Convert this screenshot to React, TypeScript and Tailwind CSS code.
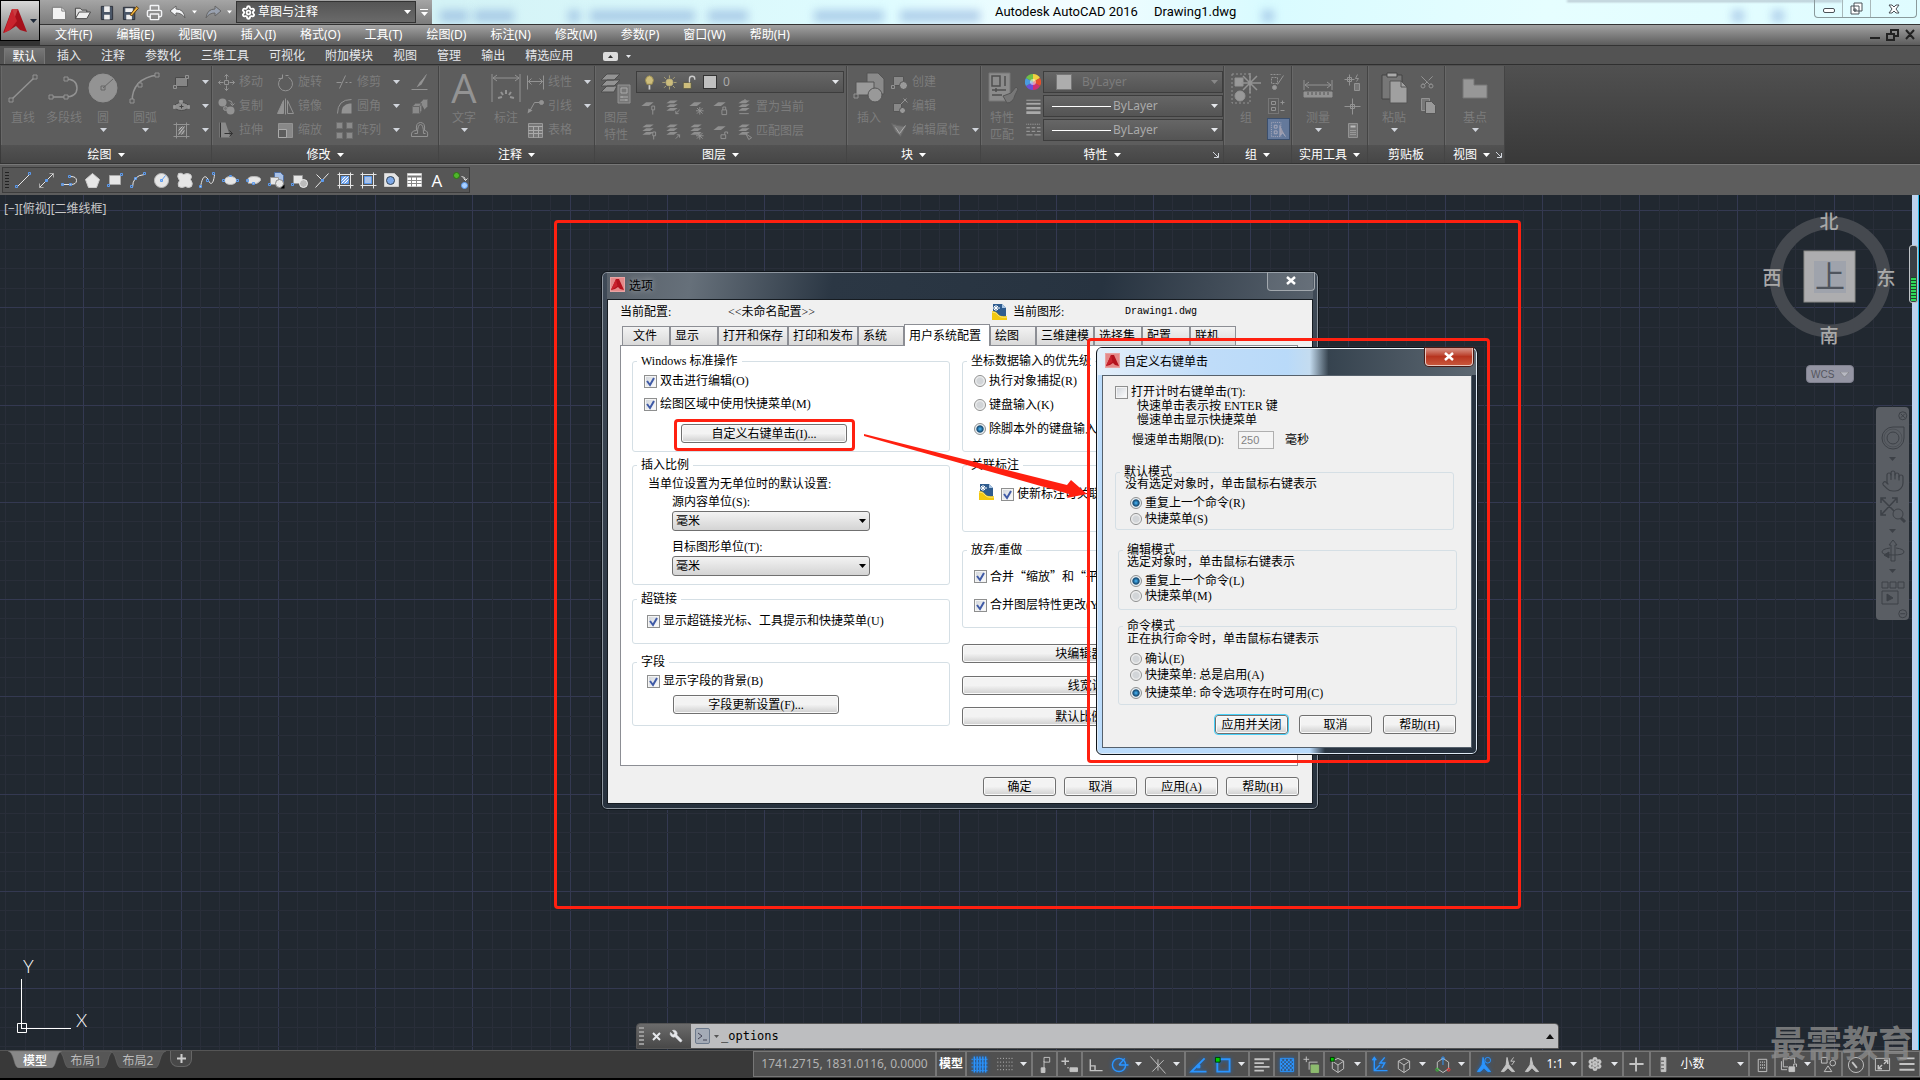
import type { ReactNode } from 'react';
import { Hand, Printer, Scissors, Settings, Wrench } from 'lucide-react';

type IconProps = { size?: number; box?: string; className?: string; children: ReactNode };

// the half unit in the default box keeps one pixel strokes sharp
const Icon = ({ size = 18, box = '-.5 -.5 18 18', className = '', children }: IconProps) => (
  <svg width={size} height={size} viewBox={box} fill="none" stroke="currentColor" className={`shrink-0 overflow-visible ${className}`}>
    {children}
  </svg>
);

const Caret = ({ className = 'text-gray-200' }: { className?: string }) => (
  <svg width="7" height="4" viewBox="0 0 7 4" className={`shrink-0 ${className}`}>
    <path d="M0 0h7L3.500 4z" fill="currentColor" />
  </svg>
);

const Corner = () => (
  <svg width="6" height="7" viewBox="0 0 6 7" className="text-gray-300" fill="none" stroke="currentColor">
    <path d="M0 1l5 5M5.500 2v4.500H1" />
  </svg>
);

const AppLogo = ({ size = 15 }: { size?: number }) => (
  <svg width={size} height={size} viewBox="0 0 15 15" className="shrink-0">
    <rect width="15" height="15" fill="#e9a3a3" />
    <rect x="1" y="1" width="13" height="13" fill="#e58a8a" />
    <path d="M6 2h3l5 11-4-1-2-2-3 2-4 1z" fill="#b3121d" />
    <path d="M6 2l1.500 7L1 13z" fill="#c9222d" />
  </svg>
);

const DwgIcon = () => (
  <svg width="15" height="16" viewBox="0 0 15 16" className="shrink-0">
    <path d="M1 0h9l4 4v9H1z" fill="#2f5c8f" />
    <path d="M10 0l4 4h-4z" fill="#a9c6e4" />
    <path d="M4 1v6M1 4h7M2 2l4 4M6 2L2 6" stroke="#fff" />
    <path d="M0 16V7q4 0 6 3t9 2v4z" fill="#f2c80f" />
    <path d="M0 8q4 0 6 3t9 2" fill="none" stroke="#fbe27a" />
  </svg>
);

/* ---------- quick access ---------- */

const quickIcons = [
  <Icon size={17} key="new"><path d="M2 3h10l4 4v9H2z" fill="#f2f2f2" stroke="#777" /><path d="M12 3v4h4" stroke="#777" /></Icon>,
  <Icon size={17} key="open"><path d="M1 15V4h5l2 2h5v3" fill="#ddd" stroke="#444" /><path d="M1 15l4-7h12l-4 7z" fill="#eee" stroke="#444" /></Icon>,
  <Icon size={17} key="save"><path d="M3 2h12v14H3z" fill="#4a5667" stroke="#2a2f38" /><path d="M6 2h6v6H6zM6 11h6v5H6z" fill="#eee" stroke="none" /></Icon>,
  <Icon size={17} key="saveas"><path d="M1 3h12v13H1z" fill="#4a5667" stroke="#2a2f38" /><path d="M3 4h8v4H3zM4 11h6v5H4z" fill="#eee" stroke="none" /><path d="M8 11l7-9 2 2-7 8z" fill="#f1b53c" stroke="#5b3a14" /></Icon>,
  <Printer size={17} key="print" className="text-gray-100" strokeWidth={2} />,
];

const UndoIcon = ({ flip = false }: { flip?: boolean }) => (
  <svg width="16" height="14" viewBox="0 0 16 14" className={flip ? 'text-gray-400' : 'text-gray-100'}>
    <path d={flip ? 'M16 6L10 1v3Q2 4 1 13q3-5 9-5v3z' : 'M0 6l6-5v3q8 0 9 9-3-5-9-5v3z'} fill="currentColor" stroke="#666" />
  </svg>
);

/* ---------- ribbon ---------- */

const big = '0 0 32 32';
const LineBig = <Icon size={32} box={big}><path d="M4 28L28 5" strokeWidth="1.500" /><path d="M2 26h4v4H2zM26 3h4v4h-4z" fill="#5d5d5d" /></Icon>;
const PolyBig = <Icon size={32} box={big}><path d="M3 25h14q12 0 12-9t-12-9" strokeWidth="1.500" /><path d="M1 23h4v4H1zM16 23h4v4h-4zM16 5h4v4h-4z" fill="#5d5d5d" /></Icon>;
const CircleBig = <Icon size={32} box={big}><circle cx="16" cy="16" r="14" fill="#939393" /><path d="M16 16L26 7" stroke="#666" /><path d="M14 14h4v4h-4z" stroke="#666" /></Icon>;
const ArcBig = <Icon size={32} box={big}><path d="M3 30Q3 6 29 3" strokeWidth="1.500" /><path d="M1 27h4v4H1zM9 11h4v4H9zM26 1h4v4h-4z" fill="#5d5d5d" /></Icon>;
const DimBig = <Icon size={32} box={big}><path d="M2 2v28M30 2v28M3 6h26M7 3L3 6l4 3M25 3l4 3-4 3" /><path d="M16 18v4M11 20l2 3M21 20l-2 3M8 26l4-1M24 26l-4-1" strokeWidth="2" /></Icon>;
const LayerBig = <Icon size={32} box={big}><path d="M7 2h13l-6 6H1zM7 8h13l-6 6H1zM7 14h10l-3 6H1z" fill="#939393" stroke="#4d4d4d" /><path d="M18 13h12v18H18z" fill="#777" /><path d="M21 16h6v5h-6zM20 25h8M20 28h8M22 24v2M26 27v2" stroke="#aaa" /></Icon>;
const InsertBig = <Icon size={32} box={big}><path d="M14 1h11l6 6v15H14z" fill="#8a8a8a" stroke="#555" /><path d="M3 10h18v13H3z" fill="#9a9a9a" stroke="#555" /><circle cx="22" cy="23" r="7" fill="#999" stroke="#555" /><path d="M1 22h4v4H1z" /></Icon>;
const MatchBig = <Icon size={32} box={big}><path d="M3 1h21v28H3z" fill="#8c8c8c" stroke="#777" /><path d="M6 4h8v10H6zM19 4v10M6 18h14M6 23h10M10 16v4" stroke="#4f4f4f" strokeWidth="1.500" /><path d="M30 15l-5 6-8 3 4 7q6 0 8-8l3-6z" fill="#777" stroke="#555" /></Icon>;
const GroupBig = <Icon size={32} box={big}><path d="M2 2h18v29H2z" strokeDasharray="2 2" /><path d="M5 6h8v8H5z" fill="#999" /><circle cx="10" cy="24" r="5" fill="#999" /><path d="M20 1v20M11 11h20M13 4l14 14M27 4L13 18" strokeWidth="1.500" /></Icon>;
const MeasureBig = <Icon size={32} box={big}><path d="M2 8v10M30 8v10M3 13h26M7 10l-4 3 4 3M25 10l4 3-4 3" /><path d="M2 20h28v5H2z" fill="#939393" /><path d="M6 20v3M10 20v3M14 20v3M18 20v3M22 20v3M26 20v3" stroke="#555" /></Icon>;
const PasteBig = <Icon size={32} box={big}><path d="M4 3h20v24H4z" fill="#777" stroke="#444" /><path d="M9 1h10v4H9z" fill="#aaa" stroke="#444" /><path d="M12 9h11l6 6v16H12z" fill="#a0a0a0" stroke="#555" /><path d="M23 9v6h6" stroke="#555" /></Icon>;
const BaseBig = <Icon size={32} box={big}><path d="M4 7h11v6h13v13H4z" fill="#979797" stroke="#777" /></Icon>;

const RectS = <Icon><path d="M3 4h12v9H3z" fill="#868686" stroke="#4a4a4a" /><path d="M1 12h3v3H1zM13 2h3v3h-3z" fill="#5d5d5d" /></Icon>;
const EllS = <Icon><ellipse cx="9" cy="9" rx="7" ry="4" fill="#8f8f8f" stroke="#4a4a4a" /><path d="M9 7v4M7 9h4" stroke="#444" /><path d="M7 3h3v2H7zM1 8h2v3H1zM15 8h2v3h-2z" fill="#999" /></Icon>;
const HatchS = <Icon><path d="M4 1v16M14 1v16M1 3h16M1 15h16" /><path d="M6 5h6v8H6z" fill="#777" stroke="none" /><path d="M6 9l4-4M6 13l6-8M9 13l3-4" stroke="#bbb" /></Icon>;
const MoveS = <Icon><path d="M9 1v5M9 12v5M1 9h5M12 9h5M7 3l2-2 2 2M7 15l2 2 2-2M3 7L1 9l2 2M15 7l2 2-2 2M7 7h4v4H7z" /></Icon>;
const CopyS = <Icon><circle cx="5" cy="5" r="4" fill="#939393" stroke="none" /><circle cx="13" cy="13" r="4" fill="#939393" stroke="none" /><circle cx="8" cy="11" r="2" fill="#777" /><path d="M11 3q4 0 4 4M13 6l2 2 2-2" /></Icon>;
const StretchS = <Icon><path d="M2 16V1h6l5 15z" fill="#8a8a8a" stroke="none" /><path d="M3 1v15M7 12h8M12 9l3 3-3 3" stroke="#333" /></Icon>;
const RotateS = <Icon><path d="M6 4a7 7 0 1 0 6 0M6 1v4H2M9 2h3" /></Icon>;
const MirrorS = <Icon><path d="M7 3v13H1z" fill="#939393" /><path d="M11 3v13h6zM9 1v16" /></Icon>;
const ScaleS = <Icon><path d="M2 2h14v14H2z" fill="#888" /><path d="M2 8h8v8H2z" fill="#5d5d5d" stroke="#aaa" /></Icon>;
const TrimS = <Icon><path d="M1 9h5M10 9h2M14 9h2M4 15l6-13" /></Icon>;
const FilletS = <Icon><path d="M2 16Q2 2 16 2" /><path d="M6 16Q6 7 14 6h2v10z" fill="#939393" stroke="none" /></Icon>;
const ArrayS = <Icon><path d="M1 1h6v6H1zM11 1h6v6h-6zM1 11h6v6H1zM11 11h6v6h-6z" fill="#8a8a8a" stroke="#6e6e6e" /></Icon>;
const EraseS = <Icon><path d="M16 2L9 9l-3 5 5-3z" fill="#939393" stroke="none" /><path d="M1 16h16M16 1l-6 8" /></Icon>;
const ExplodeS = <Icon><path d="M2 9l3-3h6v7l-2 3H2zM10 5l3-3h4v7l-3 3" fill="#8a8a8a" stroke="#6e6e6e" /><path d="M2 9h7v7M9 9l2-3" stroke="#666" /></Icon>;
const OffsetS = <Icon><path d="M1 15q-1-6 5-6-1-8 4-8t4 8q4 0 3 6z" /><path d="M4 12h3q0-9 3-9t3 9h2" /></Icon>;
const LinearS = <Icon><path d="M1 2v14M17 2v14M2 8h14M5 5L2 8l3 3M13 5l3 3-3 3" /></Icon>;
const LeaderS = <Icon><path d="M3 14l5-9h5" /><path d="M1 16l1-5 4 2z" fill="#939393" stroke="none" /><circle cx="15" cy="5" r="2" fill="#939393" /></Icon>;
const TableS = <Icon><path d="M2 2h14v14H2z" fill="#777" stroke="#999" /><path d="M2 5h14M2 9h14M2 12h14M7 5v11M12 5v11" stroke="#aaa" /></Icon>;
const BlockS = <Icon><path d="M3 3h10v9H3z" fill="#888" stroke="#555" /><circle cx="13" cy="12" r="4" fill="#999" stroke="#555" /><path d="M1 12h3v3H1z" /></Icon>;
const BlockEditS = <Icon><path d="M3 6h8v8H3z" fill="#888" stroke="#555" /><circle cx="12" cy="13" r="3" fill="#999" stroke="#555" /><path d="M10 7l6-6M13 1l4 4" /></Icon>;
const AttrS = <Icon><path d="M1 2l6 2 8 1-5 10-5-5z" fill="#777" stroke="#666" /><path d="M5 6l4 6 6-8" stroke="#aaa" /></Icon>;

const LayerS = ({ extra }: { extra: string }) => (
  <Icon size={17} className="text-[#939393]">
    <path d="M6 1h8l-4 3H2zM6 5h8l-4 3H2zM6 9h8l-4 3H2z" fill="#8f8f8f" stroke="none" />
    <path d={extra} />
  </Icon>
);
const SheetS = ({ extra }: { extra: string }) => (
  <Icon size={17} className="text-[#939393]">
    <path d="M6 3h8l-5 4H1z" fill="#8f8f8f" stroke="none" />
    <path d={extra} />
  </Icon>
);

const BigButton = ({ icon, label, w, caret }: { icon: ReactNode; label: string[]; w: string; caret?: boolean }) => (
  <button className={`flex flex-col items-center pt-1.5 text-[#939393] ${w}`}>
    {icon}
    <span className="mt-[5px] flex flex-col text-xs leading-[17px] text-[#7c7c7c]">
      {label.map((l) => <span key={l}>{l}</span>)}
    </span>
    {caret && <Caret className="mt-0.5 text-gray-300" />}
  </button>
);

const SmallButton = ({ icon, label, caret }: { icon: ReactNode; label?: string; caret?: boolean }) => (
  <button className="flex h-6 items-center gap-1 text-xs text-[#7c7c7c]">
    <span className="text-[#939393]">{icon}</span>
    {label && <span className="whitespace-nowrap">{label}</span>}
    {caret && <Caret className="ml-2 text-gray-300" />}
  </button>
);

type PanelProps = { title: string; w: string; arrow?: boolean; corner?: boolean; children: ReactNode };

const Panel = ({ title, w, arrow = true, corner, children }: PanelProps) => (
  <section className={`flex shrink-0 flex-col border-r border-[#444] bg-[#5d5d5d] ${w}`}>
    <div className="flex flex-1 border-l border-[#686868]">{children}</div>
    <div className="flex h-[18px] items-center justify-center gap-1.5 bg-linear-to-b from-[#525252] to-[#464646] px-1 pt-px text-xs whitespace-nowrap text-white">
      {corner && <span className="flex-1" />}
      <span>{title}</span>
      {arrow && <Caret className="text-white" />}
      {corner && <span className="flex flex-1 justify-end"><Corner /></span>}
    </div>
  </section>
);

const Col = ({ w, children }: { w: string; children: ReactNode }) => <div className={`flex flex-col pt-1 ${w}`}>{children}</div>;

const ByLayer = ({ label, children, dim }: { label: string; children: ReactNode; dim?: boolean }) => (
  <div className="flex h-6 items-center">
    <span className="flex w-[21px] justify-center">{children}</span>
    <div className="relative flex h-[22px] w-[180px] items-center border border-[#3d3d3d] bg-linear-to-b from-[#666] to-[#545454]">
      {dim ? <span className="ml-3 h-4 w-4 border border-[#777] bg-[#adadad]" /> : <span className="ml-2 h-px w-[59px] bg-white" />}
      <select aria-label={label} className={`h-full flex-1 appearance-none bg-transparent text-xs outline-none ${dim ? 'pl-2.5 text-[#7c7c7c]' : 'pl-0.5 text-[#aaa]'}`}>
        <option>ByLayer</option>
      </select>
      <span className="pointer-events-none absolute right-1"><Caret className={dim ? 'text-[#888]' : 'text-gray-200'} /></span>
    </div>
  </div>
);

const Ribbon = () => (
  <div className="flex h-[99px] shrink-0 border-b border-b-[#333] bg-linear-to-b from-[#505050] to-[#393939] pt-px pl-px">
    <Panel title="绘图" w="w-[211px]">
      <BigButton icon={LineBig} label={['直线']} w="w-[42px]" />
      <BigButton icon={PolyBig} label={['多段线']} w="w-[40px]" />
      <BigButton icon={CircleBig} label={['圆']} w="w-[38px]" caret />
      <BigButton icon={ArcBig} label={['圆弧']} w="w-[46px]" caret />
      <Col w="pl-1">
        <SmallButton icon={RectS} caret />
        <SmallButton icon={EllS} caret />
        <SmallButton icon={HatchS} caret />
      </Col>
    </Panel>
    <Panel title="修改" w="w-[227px]">
      <Col w="w-[63px] pl-1">
        <SmallButton icon={MoveS} label="移动" />
        <SmallButton icon={CopyS} label="复制" />
        <SmallButton icon={StretchS} label="拉伸" />
      </Col>
      <Col w="w-[59px]">
        <SmallButton icon={RotateS} label="旋转" />
        <SmallButton icon={MirrorS} label="镜像" />
        <SmallButton icon={ScaleS} label="缩放" />
      </Col>
      <Col w="w-[75px]">
        <SmallButton icon={TrimS} label="修剪" caret />
        <SmallButton icon={FilletS} label="圆角" caret />
        <SmallButton icon={ArrayS} label="阵列" caret />
      </Col>
      <Col w="">
        <SmallButton icon={EraseS} />
        <SmallButton icon={ExplodeS} />
        <SmallButton icon={OffsetS} />
      </Col>
    </Panel>
    <Panel title="注释" w="w-[156px]">
      <BigButton icon={<span className="h-8 font-['Open_Sans','Noto_Sans'] text-[40px] leading-8">A</span>} label={['文字']} w="w-[48px]" caret />
      <BigButton icon={DimBig} label={['标注']} w="w-[36px]" />
      <Col w="pl-0.5">
        <SmallButton icon={LinearS} label="线性" caret />
        <SmallButton icon={LeaderS} label="引线" caret />
        <SmallButton icon={TableS} label="表格" />
      </Col>
    </Panel>
    <Panel title="图层" w="w-[252px]">
      <BigButton icon={LayerBig} label={['图层', '特性']} w="w-[40px]" />
      <div className="flex flex-col pt-[5px]">
        <div className="relative flex h-[22px] w-[208px] items-center gap-1 border border-[#3d3d3d] bg-linear-to-b from-[#666] to-[#545454] pl-1">
          <Icon size={16}><path d="M6 11Q3 6 6 3t6 0 0 8z" fill="#cdbd7c" stroke="#9a8c50" /><path d="M9 12v5" stroke="#ccc" strokeWidth="2" /></Icon>
          <Icon size={16} className="text-[#b5aa7a]"><circle cx="9" cy="9" r="4" fill="#cdbd7c" /><path d="M9 1v3M9 14v3M1 9h3M14 9h3M3 3l2 2M13 13l2 2M15 3l-2 2M5 13l-2 2" /></Icon>
          <Icon size={16}><path d="M2 9h9v7H2z" fill="#cdbd7c" stroke="#554" /><path d="M9 9V5q0-3 3-3t3 3v1" stroke="#ccc" strokeWidth="1.500" /></Icon>
          <span className="ml-0.5 h-3.5 w-3.5 border border-[#333] bg-[#c0c0c0]" />
          <select aria-label="图层列表" className="h-full flex-1 appearance-none bg-transparent pl-0.5 text-xs text-[#aaa] outline-none"><option>0</option></select>
          <span className="pointer-events-none absolute right-1"><Caret /></span>
        </div>
        <div className="mt-0.5 flex h-6 items-center gap-[7px] pl-1 text-xs text-[#7c7c7c]">
          <SheetS extra="M13 11v5M12 7h3v4h-3z" /><LayerS extra="M16 11l-4 4M12 12v3h3" /><SheetS extra="M12 8v8M8 12h8M9 9l6 6M15 9l-6 6" /><SheetS extra="M10 11h5v5h-5zM11 11V8h3v3" /><LayerS extra="M3 15h10M9 3V0M7 2l2-2 2 2" />
          <button className="-ml-1 whitespace-nowrap">置为当前</button>
        </div>
        <div className="flex h-6 items-center gap-[7px] pl-1 text-xs text-[#7c7c7c]">
          <LayerS extra="M14 13v4M13 9h3v4h-3z" /><LayerS extra="M12 16l4-4M16 15v-3h-3" /><LayerS extra="M12 9v8M8 13h8M9 10l6 6M15 10l-6 6" /><SheetS extra="M9 12h5v4H9zM13 12V9h3v2" /><LayerS extra="M10 11l6 4-3 2z" />
          <button className="-ml-1 whitespace-nowrap">匹配图层</button>
        </div>
      </div>
    </Panel>
    <Panel title="块" w="w-[134px]">
      <BigButton icon={InsertBig} label={['插入']} w="w-[42px]" />
      <Col w="">
        <SmallButton icon={BlockS} label="创建" />
        <SmallButton icon={BlockEditS} label="编辑" />
        <SmallButton icon={AttrS} label="编辑属性" caret />
      </Col>
    </Panel>
    <Panel title="特性" w="w-[243px]" corner>
      <BigButton icon={MatchBig} label={['特性', '匹配']} w="w-[40px]" />
      <div className="flex flex-col pt-1">
        <ByLayer label="对象颜色" dim>
          <svg width="16" height="16" viewBox="-8 -8 16 16">
            <path d="M0 0V-8A8 8 0 0 1 7-4z" fill="#f0d040" /><path d="M0 0L7-4A8 8 0 0 1 7 4z" fill="#e8502c" /><path d="M0 0L7 4A8 8 0 0 1 0 8z" fill="#d03070" />
            <path d="M0 0V8A8 8 0 0 1-7 4z" fill="#6a50d8" /><path d="M0 0L-7 4A8 8 0 0 1-7-4z" fill="#4a9be0" /><path d="M0 0L-7-4A8 8 0 0 1 0-8z" fill="#70c048" />
            <circle r="3" fill="#fff" opacity=".5" />
          </svg>
        </ByLayer>
        <ByLayer label="线宽"><Icon size={16} className="text-[#aaa]"><path d="M1 2h16" /><path d="M1 6h16" strokeWidth="2" /><path d="M1 11h16M1 16h16" strokeWidth="3" /></Icon></ByLayer>
        <ByLayer label="线型"><Icon size={16} className="text-[#aaa]"><path d="M1 2h16" strokeDasharray="1 1" /><path d="M1 6h16M1 10h16" strokeDasharray="4 2" /><path d="M1 14h16" strokeDasharray="7 2" /></Icon></ByLayer>
      </div>
    </Panel>
    <Panel title="组" w="w-[68px]">
      <BigButton icon={GroupBig} label={['组']} w="w-[42px]" />
      <Col w="">
        <SmallButton icon={<Icon><path d="M3 1h10M4 4h6v6H4z" strokeDasharray="2 1" /><path d="M16 2l-6 9" /><circle cx="7" cy="14" r="2" fill="#999" /></Icon>} />
        <SmallButton icon={<Icon><path d="M1 1h10v15H1z" strokeDasharray="1 1" /><path d="M4 4h4v3H4zM4 10h4v3H4zM13 5h4M15 3v4M13 13h4" /></Icon>} />
        <button aria-label="组选择" className="flex h-[22px] w-[23px] items-center justify-center border border-[#3b4f6d] bg-[#64799b] text-[#aab]">
          <Icon size={17}><path d="M1 1h10v15H1z" strokeDasharray="1 1" /><path d="M4 4h3v3H4zM4 10h3v3H4z" /><path d="M10 4v11l3-3 3 4" fill="#99a" /></Icon>
        </button>
      </Col>
    </Panel>
    <Panel title="实用工具" w="w-[76px]">
      <BigButton icon={MeasureBig} label={['测量']} w="w-[50px]" caret />
      <Col w="">
        <SmallButton icon={<Icon><path d="M6 1v11M1 6h10M4 4h4v4H4zM14 1l-2 4h3l-2 3" /><path d="M11 10h5v7h-5z" fill="#777" /></Icon>} />
        <SmallButton icon={<Icon><path d="M9 1v16M1 9h16M7 7h4v4H7z" /></Icon>} />
        <SmallButton icon={<Icon><path d="M5 2h9v14H5z" fill="#777" /><path d="M7 5h5" stroke="#bbb" strokeWidth="2" /><path d="M7 9h6M7 11h6M7 13h6" stroke="#bbb" strokeDasharray="1 1" /></Icon>} />
      </Col>
    </Panel>
    <Panel title="剪贴板" w="w-[77px]" arrow={false}>
      <BigButton icon={PasteBig} label={['粘贴']} w="w-[50px]" caret />
      <Col w="">
        <SmallButton icon={<Scissors size={16} className="-rotate-90" strokeWidth={1.5} />} />
        <SmallButton icon={<Icon><path d="M2 1h8v12H2z" fill="#777" /><path d="M6 4h6l4 4v8H6z" fill="#999" stroke="#555" /></Icon>} />
      </Col>
    </Panel>
    <Panel title="视图" w="w-[60px]" corner>
      <BigButton icon={BaseBig} label={['基点']} w="w-[60px]" caret />
    </Panel>
  </div>
);

/* ---------- draw toolbar ---------- */

const W = '#e6e6e6';
const B = '#5b9bf0';
const drawTools = [
  <><path d="M3 15L15 3" stroke={W} /><path d="M1 14h2v2H1zM14 1h2v2h-2z" stroke={B} /></>,
  <><path d="M2 16L16 2" stroke={W} /><path d="M2 12v4h4M12 2h4v4" stroke="#aaa" /><path d="M8 8h2v2H8z" fill={B} stroke={B} /></>,
  <><path d="M2 13h8q6 0 6-4t-6-4" stroke={W} /><path d="M1 12h2v2H1zM9 12h2v2H9zM8 4h2v2H8z" stroke={B} /></>,
  <path d="M9 2l7 6-3 8H5L2 8z" fill={W} stroke="#ccc" />,
  <><path d="M3 4h11v9H3z" fill={W} stroke="#aaa" /><path d="M1 13h2v2H1zM14 2h2v2h-2z" stroke={B} /></>,
  <><path d="M3 16Q3 4 15 3" stroke={W} /><path d="M1 14h2v2H1zM5 6h2v2H5zM14 1h2v2h-2z" stroke={B} /></>,
  <><circle cx="9" cy="9" r="7" fill={W} stroke="#bbb" /><path d="M9 9l4-5M8 8h2v2H8z" stroke={B} /></>,
  <path d="M3 2q3-1 5 1 4-2 7 0 2 2 0 5 3 4 1 7-3 2-6 0-4 2-7 0-1-3 1-6-3-4-1-7z" fill={W} stroke="#ccc" />,
  <><path d="M2 16C4 2 8 4 10 9s5 4 6-6" stroke={W} /><path d="M1 14h2v2H1zM8 8h2v2H8zM14 1h2v2h-2z" stroke={B} /></>,
  <><ellipse cx="9" cy="9" rx="6" ry="4" fill={W} stroke="#bbb" /><path d="M1 8h2v2H1zM15 8h2v2h-2zM8 4h2v1H8z" stroke={B} /></>,
  <><path d="M4 12q-3-7 5-7t7 4q-3 4-8 3" fill={W} stroke="#bbb" /><path d="M2 8h2v2H2zM8 11h2v2H8z" stroke={B} /></>,
  <><path d="M7 1h6l3 3v7H7z" fill="#a9c1e6" stroke="#4e6fa5" /><path d="M3 6h8v7H3z" fill={W} stroke="#999" /><circle cx="12" cy="12" r="4" fill={W} stroke="#888" /><path d="M1 12h2v2H1z" stroke={B} /><path d="M17 13v4h-4z" fill="#000" stroke="none" /></>,
  <><path d="M3 4h9v8H3z" fill={W} stroke="#999" /><circle cx="13" cy="12" r="4" fill="#bbb" stroke="#eee" /><path d="M1 12h2v2H1z" stroke={B} /></>,
  <><path d="M3 3l6 6M15 2L2 16" stroke={W} /><path d="M8 8h2v2H8z" fill={B} stroke={B} /></>,
  <><path d="M3 1v16M14 1v16M1 3h16M1 14h16" stroke={W} /><path d="M5 5h7v7H5z" fill="#7ea9e8" stroke={B} /><path d="M5 9l4-4M5 12l7-7M8 12l4-4" stroke="#fff" /></>,
  <><path d="M3 1v16M14 1v16M1 3h16M1 14h16" stroke={W} /><path d="M5 5h7v7H5z" fill="#a9c1e6" stroke={B} /></>,
  <><path d="M2 2h10l4 4v9H2z" fill={W} stroke="#ccc" /><circle cx="8" cy="9" r="4" fill="#7ea9e8" stroke="#345" /></>,
  <><path d="M2 2h14v13H2z" fill="#fff" stroke="#ccc" /><path d="M2 5h14" stroke="#777" strokeWidth="2" /><path d="M2 9h14M2 12h14M6 5v10M11 5v10" stroke="#888" /></>,
  <text x="3" y="15" fill="#fff" stroke="none" fontSize="17" fontFamily="Open Sans">A</text>,
  <><circle cx="5" cy="4" r="3" fill="#4fb52c" stroke="#2b7412" /><circle cx="13" cy="14" r="3" fill="#a9d0ff" stroke={B} /><path d="M10 5q4 0 4 4M12 7l2 2 2-2" stroke="#ddd" /></>,
];

/* ---------- dialog controls ---------- */

const PushButton = ({ children, className = '' }: { children: ReactNode; className?: string }) => (
  <button className={`flex h-[19px] items-center justify-center rounded-[3px] border border-[#707070] bg-linear-to-b from-[#f3f3f3] from-50% to-[#cfcfcf] to-100% whitespace-pre shadow-[inset_0_0_0_1px_#fafafa] ${className}`}>
    {children}
  </button>
);

const Check = ({ label, on = true, className = '' }: { label: string; on?: boolean; className?: string }) => (
  <label className={`flex h-3.5 items-center gap-[3px] whitespace-nowrap ${className}`}>
    <span className="relative flex h-[13px] w-[13px] shrink-0">
      <input type="checkbox" defaultChecked={on} className="peer h-[13px] w-[13px] appearance-none border border-[#8e8f8f] bg-linear-to-br from-[#cfd3d9] to-white shadow-[inset_0_0_0_1px_#f4f4f4]" />
      <svg viewBox="0 0 13 13" className="pointer-events-none absolute inset-0 hidden peer-checked:block"><path d="M3 6l3 4 4-7" fill="none" stroke="#3f5aa6" strokeWidth="2" /></svg>
    </span>
    {label}
  </label>
);

const Radio = ({ label, name, on, className = '' }: { label: string; name: string; on?: boolean; className?: string }) => (
  <label className={`flex h-3.5 items-center gap-[3px] whitespace-nowrap ${className}`}>
    <input
      type="radio"
      name={name}
      defaultChecked={on}
      className="h-3 w-3 shrink-0 appearance-none rounded-full border border-[#8e8f8f] bg-[radial-gradient(circle,#d2d5d8_40%,#f6f6f6_70%)] checked:bg-[radial-gradient(circle,#3fa0dc_10%,#12466e_45%,#e8eef2_58%)]"
    />
    {label}
  </label>
);

const Group = ({ title, className = '', pad = '', children }: { title: string; className?: string; pad?: string; children: ReactNode }) => (
  <fieldset className={`min-w-0 rounded-[3px] border border-[#d5dfe5] ${className}`}>
    <legend className="ml-1 h-3 px-1 leading-3 whitespace-nowrap">{title}</legend>
    <div className={`flex flex-col ${pad}`}>{children}</div>
  </fieldset>
);

const UnitSelect = ({ id }: { id: string }) => (
  <div className="relative mt-[3px] ml-[39px] flex w-[198px] items-center">
    <select id={id} className="h-5 w-full appearance-none rounded-[3px] border border-[#707070] bg-linear-to-b from-[#f3f3f3] to-[#d4d4d4] pl-[3px] leading-none">
      <option>毫米</option>
    </select>
    <span className="pointer-events-none absolute right-1"><Caret className="text-black" /></span>
  </div>
);

const tabClasses = 'h-[19px] border border-b-0 border-[#8c8e94] bg-linear-to-b from-[#f3f3f3] to-[#d9d9d9] px-1 text-left leading-4 whitespace-nowrap';
const tabs = [
  { name: '文件', w: 'w-12 pl-2.5' },
  { name: '显示', w: 'w-12' },
  { name: '打开和保存', w: 'w-[70px]' },
  { name: '打印和发布', w: 'w-[70px]' },
  { name: '系统', w: 'w-[46px]' },
  { name: '用户系统配置', w: 'w-[86px]' },
  { name: '绘图', w: 'w-[46px]' },
  { name: '三维建模', w: 'w-[58px]' },
  { name: '选择集', w: 'w-12' },
  { name: '配置', w: 'w-12' },
  { name: '联机', w: 'w-[46px]' },
];

const OptionsDialog = () => (
  <div className="absolute top-[76px] left-[601px] isolate flex h-[539px] w-[718px] flex-col rounded-md border border-[#10151b] bg-linear-to-b from-[#3f4a57] to-[#27313d] px-[5px] pb-[5px] font-['Liberation_Serif','Noto_Sans_CJK_SC',serif] text-xs text-black shadow-[inset_0_0_0_1px_#8d959e]">
    <header className="flex h-[27px] items-start gap-1 bg-[linear-gradient(100deg,#59616a_0%,#66707a_12%,#2b3744_32%,#273340_70%,#56606b_100%)] pl-[3px] shadow-[inset_0_1px_0_#8d959e]">
      <span className="flex h-[25px] items-center gap-1 font-['Noto_Sans_CJK_SC',sans-serif]">
        <AppLogo />
        <span className="[text-shadow:0_0_6px_#fff9]">选项</span>
      </span>
      <button aria-label="关闭" className="-mr-0.5 ml-auto flex h-[19px] w-12 items-center justify-center rounded-b border border-t-0 border-[#a2a8ae] bg-white/10 pb-0.5">
        <svg width="10" height="9" viewBox="0 0 10 9"><path d="M1 1l8 7M9 1L1 8" stroke="#fff" strokeWidth="2.500" /></svg>
      </button>
    </header>
    <div className="flex flex-1 flex-col border border-[#161c22] bg-[#f0f0f0] pr-[13px] pl-3">
      <div className="flex h-6 items-center">
        <span className="w-[108px]">当前配置:</span>
        <span className="w-[264px]">&lt;&lt;未命名配置&gt;&gt;</span>
        <DwgIcon />
        <span className="ml-1.5 w-[112px]">当前图形:</span>
        <span className="font-['Liberation_Mono',monospace] text-[10px]">Drawing1.dwg</span>
      </div>
      <nav className="z-10 flex h-[21px] items-end pl-0.5">
        {tabs.map((t) =>
          t.name === '用户系统配置' ? (
            <button key={t.name} className={`-mb-px h-[22px] border border-b-0 border-[#8c8e94] bg-white px-1 text-left leading-4 whitespace-nowrap ${t.w}`}>{t.name}</button>
          ) : (
            <button key={t.name} className={`${tabClasses} ${t.w}`}>{t.name}</button>
          )
        )}
      </nav>
      <div className="mr-px grid h-[421px] grid-cols-[318px_318px] items-start gap-x-3 border border-[#8c8e94] bg-white pt-[9px] pl-[11px]">
        <div className="flex flex-col">
          <Group title="Windows 标准操作" className="h-[97px]" pad="pl-[11px]">
            <Check label="双击进行编辑(O)" className="mt-[7px]" />
            <Check label="绘图区域中使用快捷菜单(M)" className="mt-[9px]" />
            <PushButton className="mt-[13px] ml-[37px] w-[166px]">自定义右键单击(I)...</PushButton>
          </Group>
          <Group title="插入比例" className="mt-[7px] h-[126px]">
            <p className="mt-[7px] ml-[15px] leading-3">当单位设置为无单位时的默认设置:</p>
            <label htmlFor="source" className="mt-1.5 ml-[39px] block leading-3">源内容单位(S):</label>
            <UnitSelect id="source" />
            <label htmlFor="target" className="mt-2.5 ml-[39px] block leading-3">目标图形单位(T):</label>
            <UnitSelect id="target" />
          </Group>
          <Group title="超链接" className="mt-2 h-[51px]" pad="pl-3.5">
            <Check label="显示超链接光标、工具提示和快捷菜单(U)" className="mt-[9px]" />
          </Group>
          <Group title="字段" className="mt-3 h-[70px]" pad="pl-3.5">
            <Check label="显示字段的背景(B)" className="mt-1.5" />
            <PushButton className="mt-[7px] ml-[26px] w-[166px]">字段更新设置(F)...</PushButton>
          </Group>
        </div>
        <div className="flex flex-col">
          <Group title="坐标数据输入的优先级" className="h-[97px]" pad="pl-[11px]">
            <Radio name="priority" label="执行对象捕捉(R)" className="mt-[7px]" />
            <Radio name="priority" label="键盘输入(K)" className="mt-2.5" />
            <Radio name="priority" label="除脚本外的键盘输入(X)" on className="mt-2.5" />
          </Group>
          <Group title="关联标注" className="mt-[7px] h-[73px]" pad="pl-4">
            <div className="mt-[13px] flex items-center gap-[7px]">
              <DwgIcon />
              <Check label="使新标注可关联(D)" className="pt-1" />
            </div>
          </Group>
          <Group title="放弃/重做" className="mt-3 h-[84px]" pad="pl-[11px]">
            <Check label="合并“缩放”和“平移”命令(P)" className="mt-[13px] font-['Noto_Sans_CJK_SC',sans-serif]" />
            <Check label="合并图层特性更改(Y)" className="mt-[15px]" />
          </Group>
          <PushButton className="mt-4 w-[284px]">块编辑器设置(N)...</PushButton>
          <PushButton className="mt-[13px] w-[284px]">线宽设置(L)...</PushButton>
          <PushButton className="mt-3 w-[284px]">默认比例列表(D)...</PushButton>
        </div>
      </div>
      <footer className="mt-[11px] flex justify-end gap-2">
        <PushButton className="w-[73px]">确定</PushButton>
        <PushButton className="w-[73px]">取消</PushButton>
        <PushButton className="w-[73px]">应用(A)</PushButton>
        <PushButton className="w-[73px]">帮助(H)</PushButton>
      </footer>
    </div>
  </div>
);

const RightClickDialog = () => (
  <div className="absolute top-[152px] left-[1096px] flex h-[408px] w-[382px] flex-col rounded-md border border-[#10151b] bg-[linear-gradient(90deg,#bcdcfb_0%,#b8dafb_56%,#2a3643_60%,#27323f_100%)] px-[5px] pb-[6px] font-['Liberation_Serif','Noto_Sans_CJK_SC',serif] text-xs text-black shadow-[inset_0_0_0_1px_#dfeaf5]">
    <header className="-mx-1 flex h-[27px] items-start rounded-t bg-[linear-gradient(90deg,#e4effa_0%,#bfdcf9_30%,#b9daf9_50%,#c4dcf0_56%,#36434f_61%,#5d6872_100%)] px-1 shadow-[inset_0_1px_0_#eef5fb]">
      <span className="flex h-[25px] items-center gap-1 pl-[3px] font-['Noto_Sans_CJK_SC',sans-serif]">
        <AppLogo />
        <span>自定义右键单击</span>
      </span>
      <button aria-label="关闭" className="-mr-px ml-auto flex h-[18px] w-12 items-center justify-center rounded-b border border-t-0 border-[#e9c8c0] bg-linear-to-b from-[#d8958a] via-[#b7341f] to-[#c8553a] shadow-[0_0_0_1px_#4a1a14]">
        <svg width="10" height="9" viewBox="0 0 10 9"><path d="M1 1l8 7M9 1L1 8" stroke="#fff" strokeWidth="2.500" /></svg>
      </button>
    </header>
    <div className="flex flex-1 flex-col border border-[#56616c] bg-[#f0f0f0] pt-[9px] pl-3">
      <Check label="打开计时右键单击(T):" on={false} />
      <p className="ml-[22px] h-3.5 leading-[14px]">快速单击表示按 ENTER 键</p>
      <p className="ml-[22px] h-3.5 leading-[14px]">慢速单击显示快捷菜单</p>
      <div className="mt-1 ml-[17px] flex h-[18px] items-center">
        <label htmlFor="limit" className="w-[106px]">慢速单击期限(D):</label>
        <input id="limit" defaultValue="250" className="h-[18px] w-9 border border-[#afafaf] bg-[#f4f4f4] pl-0.5 font-['Liberation_Sans'] text-[11px] text-[#838383]" />
        <span className="ml-[11px]">毫秒</span>
      </div>
      <Group title="默认模式" className="mt-[17px] h-16 w-[339px]" pad="pl-3.5">
        <p className="-ml-[5px] leading-3">没有选定对象时，单击鼠标右键表示</p>
        <Radio name="default" label="重复上一个命令(R)" on className="mt-1.5" />
        <Radio name="default" label="快捷菜单(S)" className="mt-0.5" />
      </Group>
      <Group title="编辑模式" className="mt-3.5 ml-[3px] h-[66px] w-[339px]" pad="pl-[11px]">
        <p className="-ml-[3px] leading-3">选定对象时，单击鼠标右键表示</p>
        <Radio name="edit" label="重复上一个命令(L)" on className="mt-1.5" />
        <Radio name="edit" label="快捷菜单(M)" className="mt-px" />
      </Group>
      <Group title="命令模式" className="mt-2.5 ml-[3px] h-[85px] w-[339px]" pad="pl-[11px]">
        <p className="-ml-[3px] leading-[14px]">正在执行命令时，单击鼠标右键表示</p>
        <Radio name="command" label="确认(E)" className="mt-1.5" />
        <Radio name="command" label="快捷菜单: 总是启用(A)" className="mt-0.5" />
        <Radio name="command" label="快捷菜单: 命令选项存在时可用(C)" on className="mt-1" />
      </Group>
      <footer className="mt-2.5 flex justify-end gap-[11px] pr-[15px]">
        <PushButton className="w-[73px] border-[#2c86b8] outline outline-[#48d0f8]">应用并关闭</PushButton>
        <PushButton className="w-[73px]">取消</PushButton>
        <PushButton className="w-[73px]">帮助(H)</PushButton>
      </footer>
    </div>
  </div>
);

/* ---------- canvas ---------- */

const STEP = 97.25;
const lines = Array.from({ length: 200 }, (_, i) => i);

const Grid = () => (
  <svg className="absolute inset-0 h-full w-full" shapeRendering="crispEdges">
    {lines.map((i) => {
      const x = Math.round(-14 + (i * STEP) / 5);
      const y = Math.round(15 + ((i - 5) * STEP) / 5);
      const stroke = i % 5 ? '#292e39' : '#343951';
      return (
        <g key={i} fill={stroke}>
          <rect x={x} y="0" width="1" height="100%" />
          <rect x="0" y={y} width="100%" height="1" />
        </g>
      );
    })}
  </svg>
);

const ViewCube = () => (
  <div className="absolute top-[7px] right-[16px] w-[150px] text-[#a9a9a9]">
    <svg width="150" height="150" viewBox="0 0 150 150" fontFamily="Liberation Serif, Noto Sans CJK SC, serif" fontSize="19" fontWeight="500" fill="#a9a9a9" textAnchor="middle">
      <circle cx="76" cy="75" r="54" fill="none" stroke="#45494f" strokeWidth="13" />
      <rect x="50" y="49" width="51" height="51" fill="#adadaf" stroke="#8b8b88" />
      <rect x="60" y="59" width="32" height="32" fill="#9fa3ac" />
      <text x="76" y="85" fontSize="30" fontWeight="400" fill="#50555e">上</text>
      <text x="75" y="27">北</text>
      <text x="75" y="141">南</text>
      <text x="18" y="83">西</text>
      <text x="132" y="83">东</text>
    </svg>
    <button className="mt-[13px] ml-[52px] flex h-[18px] w-12 items-center gap-1.5 rounded border border-[#7f808e] bg-[#9495a3] pl-1 font-['Liberation_Sans'] text-[10px] text-[#54565f]">
      WCS
      <svg width="9" height="5" viewBox="0 0 9 5"><path d="M0 0h9L4.500 5z" fill="#b7b8c2" stroke="#777" strokeWidth=".500" /></svg>
    </button>
  </div>
);

const NavBar = () => (
  <div className="absolute top-[212px] right-[11px] flex h-[213px] w-[33px] flex-col items-center rounded bg-[#5a5e64] text-[#3d4147]">
    <Icon size={9} className="mt-1 mr-0.5 ml-auto"><circle cx="9" cy="9" r="8" strokeWidth="2" /><path d="M5 5l8 8M13 5l-8 8" strokeWidth="2" /></Icon>
    <Icon size={24} box="0 0 24 24" className="mt-1.5"><path d="M12 1h11v11a11 11 0 1 1-11-11z" /><circle cx="12" cy="12" r="6" /><circle cx="12" cy="12" r="9" opacity=".5" /></Icon>
    <Caret className="mt-[7px] text-[#3d4147]" />
    <Hand size={24} strokeWidth={1.2} className="mt-2" />
    <Icon size={26} box="0 0 26 26" className="mt-1"><path d="M2 2l15 15M16 2L2 17M1 6V1h5M12 1h5v5M1 13v5h5" strokeWidth="1.500" /><circle cx="18" cy="17" r="5" fill="#5a5e64" /><path d="M21 21l4 4" strokeWidth="3" /></Icon>
    <Caret className="mt-1.5 text-[#3d4147]" />
    <Icon size={24} box="0 0 24 24" className="mt-1.5"><path d="M10 22V6H8l4-5 4 5h-2v16zM9 9q-8 1-8 4t11 3 11-3-8-4" /><path d="M8 13v6l-5-3z" fill="currentColor" /></Icon>
    <Caret className="mt-1.5 text-[#3d4147]" />
    <Icon size={24} box="0 0 24 24" className="mt-2"><path d="M1 1h6v6H1zM9 1h6v6H9zM17 1h6v6h-6zM1 10h16v13H1z" /><path d="M6 13v7l6-3z" fill="currentColor" /></Icon>
    <Icon size={9} className="mt-auto mr-0.5 mb-0.5 ml-auto"><circle cx="9" cy="9" r="8" strokeWidth="2" /><path d="M4 9h10" strokeWidth="2" /></Icon>
  </div>
);

const Annotations = () => (
  <>
    <div className="pointer-events-none absolute top-[25px] left-[554px] h-[689px] w-[967px] rounded-sm border-3 border-[#ff2010]" />
    <div className="pointer-events-none absolute top-[143px] left-[1087px] h-[425px] w-[403px] rounded-sm border-3 border-[#ff2010]" />
    <div className="pointer-events-none absolute top-[224px] left-[674px] h-8 w-[181px] rounded-sm border-3 border-[#ff2010]" />
    <svg className="pointer-events-none absolute top-[235px] left-[860px]" width="230" height="72" viewBox="0 0 230 72">
      <path d="M4 4l203 51 4-5 16 14-20 4 2-4L4 6z" fill="#ff2010" />
    </svg>
  </>
);

const Canvas = () => (
  <main className="relative flex-1 overflow-hidden bg-[#212830]">
    <Grid />
    <div className="absolute top-1.5 left-1 text-xs text-[#c9c9c9]">[−][俯视][二维线框]</div>
    <ViewCube />
    <NavBar />
    <div className="absolute inset-y-0 right-0 w-2 border-r border-r-black bg-[#bcd2ee] shadow-[inset_-1px_0_0_#22b8e8]" />
    <div className="absolute top-[50px] right-0.5 flex h-[58px] w-[9px] items-end rounded-[3px] border border-[#c0c4c8] bg-[#3a3f45] p-px">
      <span className="h-6 w-full bg-[repeating-linear-gradient(0deg,#2fd65a_0_2px,#174a25_2px_3px)]" />
    </div>
    <svg className="absolute bottom-4 left-4" width="84" height="80" viewBox="0 0 84 80" fill="none" stroke="#fff">
      <path d="M5.500 25v50M5.500 74.500H55M1.500 69.500h9v9h-9z" />
      <text x="7" y="19" fill="#fff" stroke="none" fontSize="18" fontFamily="Lato" fontWeight="300">Y</text>
      <text x="60" y="73" fill="#fff" stroke="none" fontSize="18" fontFamily="Lato" fontWeight="300">X</text>
    </svg>
    <OptionsDialog />
    <RightClickDialog />
    <Annotations />
    <div className="absolute bottom-px left-[636px] flex h-[26px] w-[923px] items-center overflow-hidden rounded-t-sm border border-[#555]">
      <div className="flex h-full w-[54px] items-center gap-2 bg-linear-to-b from-[#6b6b6b] to-[#484848] pl-0.5 text-gray-200">
        <span className="h-[18px] w-[5px] bg-[repeating-linear-gradient(0deg,#999_0_2px,transparent_2px_4px)]" />
        <svg width="9" height="9" viewBox="0 0 9 9"><path d="M1 1l7 7M8 1L1 8" stroke="currentColor" strokeWidth="2" /></svg>
        <Wrench size={14} className="-scale-x-100" fill="currentColor" strokeWidth={1} />
      </div>
      <div className="flex h-full flex-1 items-center bg-[#bdbec0] px-1">
        <span className="flex h-4 w-[15px] items-center justify-center rounded-xs border border-[#6d7a8c] bg-[#a4abb6]">
          <svg width="11" height="9" viewBox="0 0 11 9" fill="none" stroke="#445"><path d="M1 1l4 3-4 3M6 8h4" /></svg>
        </span>
        <Caret className="ml-1 h-[3px] w-[5px] text-[#555]" />
        <input aria-label="命令" defaultValue="_options" className="ml-0.5 flex-1 bg-transparent font-['DejaVu_Sans_Mono','Noto_Sans_CJK_SC',monospace] text-xs text-black outline-none" />
        <svg width="8" height="5" viewBox="0 0 8 5"><path d="M0 5l4-5 4 5z" fill="#111" /></svg>
      </div>
    </div>
  </main>
);

/* ---------- status bar ---------- */

const Cell = ({ w, children }: { w: string; children: ReactNode }) => (
  <div className={`flex h-[26px] shrink-0 items-center justify-around border border-[#777] bg-[#505050] ${w}`}>{children}</div>
);

const Tool = ({ on, children }: { on?: boolean; children: ReactNode }) => (
  <button className={on ? 'text-[#2b95ff] drop-shadow-[0_0_2px_#1468c8]' : 'text-[#c4c4c4]'}>
    <Icon size={17}>{children}</Icon>
  </button>
);

const LayoutTab = ({ label, active, w }: { label: string; active?: boolean; w: string }) => (
  <button className={`relative -ml-1 flex h-[17px] items-center justify-center pt-0.5 text-xs ${active ? 'z-10 font-medium text-white' : 'text-[#bbb]'} ${w}`}>
    <svg className="absolute inset-0 h-full w-full" viewBox="0 0 56 17" preserveAspectRatio="none">
      <path d="M0 0q4 1 6 9t5 8h34q3 0 5-8t6-9z" fill={active ? '#888' : '#565656'} stroke="#6c6c6c" strokeWidth=".500" />
    </svg>
    <span className="relative">{label}</span>
  </button>
);

const cube = 'M3 5l6-3 6 3v8l-6 4-6-4zM3 5l6 4 6-4M9 9v8';
const person = 'M8 1l2 8 6 7h-3l-4-4-4 4H2l5-7z';

const StatusBar = () => (
  <footer className="relative flex h-[30px] shrink-0 items-start border-t border-b-2 border-[#555] border-b-black bg-[#393939]">
    <div className="flex pl-3">
      <LayoutTab label="模型" active w="w-[54px]" />
      <LayoutTab label="布局1" w="w-[56px]" />
      <LayoutTab label="布局2" w="w-[56px]" />
      <button aria-label="新建布局" className="ml-1 flex h-4 w-[22px] items-center justify-center rounded-b-lg border border-t-0 border-[#666] bg-[#484848] text-[#ccc]">
        <svg width="9" height="9" viewBox="0 0 9 9"><path d="M4.500 0v9M0 4.500h9" stroke="currentColor" strokeWidth="2" /></svg>
      </button>
    </div>
    <div className="ml-auto flex text-xs text-white">
      <div className="flex h-[26px] w-[183px] shrink-0 items-center justify-center border border-[#777] bg-[#505050] whitespace-nowrap text-[#b3b3b3]">1741.2715, 1831.0116, 0.0000</div>
      <Cell w="w-[30px]"><button className="font-bold whitespace-nowrap">模型</button></Cell>
      <Cell w="w-[66px]">
        <Tool on><path d="M3 0v17M6 0v17M9 0v17M12 0v17M15 0v17" strokeWidth="1.500" /><path d="M0 3h18M0 7h18M0 11h18M0 15h18" strokeDasharray="2 1" /></Tool>
        <Tool><path d="M2 2h16M2 6h16M2 10h16M2 14h16" strokeDasharray="1 2" /></Tool>
        <Caret />
      </Cell>
      <Cell w="w-[25px]"><Tool><path d="M8 1h6v5H8zM8 5v8" /><path d="M5 12h4v5H5z" fill="currentColor" /></Tool></Cell>
      <Cell w="w-[25px]"><Tool><path d="M4 1v8M0 5h8" strokeWidth="1.500" /><path d="M9 12h8v4H9z" fill="currentColor" /><path d="M6 12h2" /></Tool></Cell>
      <Cell w="w-[103px]">
        <Tool><path d="M3 3v12h13M3 10h5v5" strokeWidth="1.500" /></Tool>
        <Tool on><circle cx="8" cy="9" r="7" strokeWidth="1.500" /><path d="M8 9h10M8 9l6-7" strokeWidth="1.500" /></Tool>
        <Caret />
        <Tool><path d="M1 0l16 18M9 3v12M3 16L15 4" /></Tool>
        <Caret />
      </Cell>
      <Cell w="w-[64px]">
        <Tool on><path d="M15 2L1 16h16" strokeWidth="2" /><path d="M7 9h3v3H7z" fill="currentColor" /></Tool>
        <Tool on><path d="M3 3h13v13H3z" strokeWidth="2" /><path d="M1 1h5v5H1z" fill="#0c0" stroke="#030" /></Tool>
        <Caret />
      </Cell>
      <Cell w="w-[25px]"><Tool><path d="M1 3h16M1 7h10M1 11h16M1 15h10" strokeWidth="2" /></Tool></Cell>
      <Cell w="w-[25px]"><Tool on><path d="M2 2h14v14H2z" /><path d="M2 4h14M2 8h14M2 12h14M4 6h12M4 10h12M4 14h12" strokeDasharray="2 2" strokeWidth="2" /></Tool></Cell>
      <Cell w="w-[25px]"><Tool><path d="M3 0v6M0 3h6" /><path d="M8 9h8v8H8z" fill="#8dbb6f" stroke="#8dbb6f" /><path d="M6 14V6h9" /></Tool></Cell>
      <Cell w="w-[42px]"><Tool><path d={cube} /><path d="M1 1h4v4H1z" fill="#0c0" stroke="#030" /></Tool><Caret /></Cell>
      <Cell w="w-[104px]">
        <Tool on><path d="M3 2v13h14M3 15L9 9M1 4l2-3 2 3M14 1L9 7h5l-3 5" strokeWidth="1.500" /></Tool>
        <Tool><path d={cube} /></Tool>
        <Caret />
        <Tool><path d="M9 2l6 4v7l-6 4-6-4V6z" /><path d="M9 2v7" stroke="#39f" /><circle cx="9" cy="2" r="1.500" stroke="#39f" /><circle cx="3" cy="14" r="1.500" stroke="#3c3" /><circle cx="15" cy="14" r="1.500" stroke="#f33" /></Tool>
        <Caret />
      </Cell>
      <Cell w="w-[112px]">
        <Tool on><path d={person} fill="currentColor" /><circle cx="13" cy="4" r="3" /></Tool>
        <Tool><path d={person} fill="currentColor" /><path d="M15 1l-3 4h4l-3 4" /></Tool>
        <Tool><path d={person} fill="currentColor" /></Tool>
        <button>1:1</button>
        <Caret />
      </Cell>
      <Cell w="w-[41px]"><Settings size={14} strokeWidth={4} className="text-[#c4c4c4]" /><Caret /></Cell>
      <Cell w="w-[27px]"><Tool><path d="M8 1v15M1 8h15" strokeWidth="2" /></Tool></Cell>
      <Cell w="w-[99px]">
        <Tool><path d="M6 1h5v15H6z" fill="currentColor" /><path d="M6 5h3M6 9h3M6 13h3" stroke="#444" /></Tool>
        <select aria-label="单位" className="w-12 appearance-none bg-transparent outline-none"><option>小数</option></select>
        <Caret />
      </Cell>
      <Cell w="w-[26px]"><Tool><path d="M4 3h9v13H4z" /><path d="M6 6h6M6 9h6M6 12h6" strokeDasharray="1 1" strokeWidth="1.500" /></Tool></Cell>
      <Cell w="w-[40px]"><Tool><path d="M3 2h12v5M1 5v9h6M3 2v9h5" /><path d="M9 11h6v5H9z" fill="currentColor" /><path d="M14 11V8h3v3" /></Tool><Caret /></Cell>
      <Cell w="w-[27px]"><Tool><path d="M1 1h6v6H1z" /><circle cx="13" cy="7" r="3" /><path d="M8 10l4 6H4z" /></Tool></Cell>
      <Cell w="w-[27px]"><Tool><circle cx="9" cy="9" r="8" /><path d="M5 6l5 6" strokeWidth="2" /></Tool></Cell>
      <Cell w="w-[51px]">
        <Tool><path d="M1 2h15v13H1z" /><path d="M10 8l4-4M10 4h4v4M8 9l-4 4M8 13H4V9" strokeWidth="1.500" /></Tool>
        <Tool><path d="M1 2h16M1 8h16M1 14h16" strokeWidth="2" /></Tool>
      </Cell>
    </div>
    <div className="pointer-events-none absolute right-1.5 bottom-4 text-4xl leading-none font-bold text-[#8c8c8c]/80">最需教育</div>
  </footer>
);

const menus = ['文件(F)', '编辑(E)', '视图(V)', '插入(I)', '格式(O)', '工具(T)', '绘图(D)', '标注(N)', '修改(M)', '参数(P)', '窗口(W)', '帮助(H)'];
const ribbonTabs = ['插入', '注释', '参数化', '三维工具', '可视化', '附加模块', '视图', '管理', '输出', '精选应用'];

const Blur = ({ className }: { className: string }) => <span className={`absolute top-2.5 h-3 bg-[#7fa6d8]/50 blur-[4px] ${className}`} />;

export default function App() {
  return (
    <div className="flex h-screen flex-col overflow-hidden bg-[#5d5d5d] font-['Noto_Sans','Noto_Sans_CJK_SC',sans-serif] select-none">
      <div className="flex h-[45px] shrink-0 bg-[#333]">
        <button aria-label="应用程序菜单" className="flex h-[41px] w-10 shrink-0 items-center justify-center gap-0.5 border border-black bg-linear-to-b from-[#d8d8d8] to-[#777]">
          <svg width="25" height="26" viewBox="0 0 25 26">
            <path d="M9 1h6l9 23-7-2-4-4-6 4-7 3z" fill="#a5101b" />
            <path d="M9 1L1 25l6-3 7-9z" fill="#c9242e" />
            <path d="M9 1h6l-8 21 5-13z" fill="#e05a5a" opacity=".6" />
          </svg>
          <Caret className="text-gray-800" />
        </button>
        <div className="flex min-w-0 flex-1 flex-col">
          <div className="relative flex h-6 items-start overflow-hidden bg-[linear-gradient(100deg,#d4f3f6_22%,#dffcff_45%,#f3fdff_55%,#d9fbff_65%,#e6feff_80%,#dffcff_100%)]">
            <div className="z-10 flex h-6 shrink-0 items-center bg-linear-to-b from-[#a5a5a5] to-[#7c7c7c] pl-2.5">
              <div className="flex items-center gap-[7px]">{quickIcons.map((icon, i) => <button key={i}>{icon}</button>)}</div>
              <button aria-label="放弃" className="ml-[7px]"><UndoIcon /></button>
              <Caret className="ml-1.5 h-1 w-[5px] text-white" />
              <button aria-label="重做" className="ml-2"><UndoIcon flip /></button>
              <Caret className="mr-1 ml-1.5 h-1 w-[5px] text-white" />
              <div className="relative flex h-[22px] w-[180px] items-center border border-[#333] bg-linear-to-b from-[#555] to-[#6a6a6a] pl-1 text-white">
                <Settings size={15} strokeWidth={3} />
                <select aria-label="工作空间" className="h-full flex-1 appearance-none bg-transparent pl-0.5 text-xs outline-none"><option>草图与注释</option></select>
                <span className="pointer-events-none absolute right-1"><Caret className="text-white" /></span>
              </div>
              <button aria-label="自定义" className="flex w-4 flex-col items-center gap-0.5"><span className="h-px w-2 bg-white" /><Caret className="text-white" /></button>
            </div>
            <Blur className="left-[400px] w-7" />
            <Blur className="left-[434px] w-10" />
            <Blur className="left-[528px] w-3" />
            <Blur className="left-[550px] w-[105px]" />
            <Blur className="left-[668px] w-10" />
            <Blur className="left-[774px] w-[70px]" />
            <Blur className="left-[860px] w-20" />
            <Blur className="left-[1222px] w-3" />
            <Blur className="right-[176px] w-3" />
            <Blur className="right-[136px] w-3" />
            <div className="absolute top-0 right-[78px] h-0.5 w-[275px] bg-gray-400/70 blur-[1px]" />
            <h1 className="absolute left-[955px] font-['Roboto',sans-serif] text-[13px] leading-6 whitespace-pre text-black">Autodesk AutoCAD 2016     Drawing1.dwg</h1>
            <div className="absolute top-0 right-[3px] flex h-[18px] w-[103px] rounded-b border border-t-0 border-[#8a9a9c] text-[#4b5258]">
              <button aria-label="最小化" className="flex w-7 items-center justify-center border-r border-[#a8b8ba]"><span className="mt-1 h-[5px] w-3 rounded-xs border border-current bg-white" /></button>
              <button aria-label="还原" className="flex w-7 items-center justify-center border-r border-[#a8b8ba]"><svg width="13" height="13" viewBox="0 0 13 13" fill="#fff" stroke="currentColor"><path d="M4 1h8v8H4zM1 4h8v8H1zM4 7h2v2H4z" /></svg></button>
              <button aria-label="关闭窗口" className="flex flex-1 items-center justify-center"><svg width="12" height="10" viewBox="0 0 12 10" fill="#fff" stroke="currentColor"><path d="M1 1h3l2 2 2-2h3L8 5l3 4H8L6 7 4 9H1l3-4z" /></svg></button>
            </div>
          </div>
          <nav className="mt-px flex h-5 items-center gap-6 bg-linear-to-b from-[#a3a3a3] to-[#5c5c5c] pr-1 pl-[15px] text-xs text-white">
            {menus.map((m) => <button key={m} className="shrink-0 whitespace-nowrap">{m}</button>)}
            <div className="ml-auto flex items-center gap-1.5 text-[#222]">
              <svg width="46" height="12" viewBox="0 0 46 12" fill="none" stroke="currentColor" strokeWidth="2"><path d="M0 9h10M17 5h7v6h-7zM21 4V1h7v6h-3M36 1l8 9M44 1l-8 9" /></svg>
            </div>
          </nav>
        </div>
      </div>
      <nav className="flex h-5 shrink-0 items-center gap-5 border-y border-t-[#333] border-b-[#2f2f2f] bg-[#535353] pt-0.5 pl-1 text-xs text-gray-200">
        <button className="-mr-2 h-4 w-[41px] self-end border border-b-0 border-[#777] bg-linear-to-b from-[#777] to-[#5d5d5d] leading-4 text-white">默认</button>
        {ribbonTabs.map((t) => <button key={t} className="whitespace-nowrap">{t}</button>)}
        <button aria-label="最小化功能区" className="ml-2.5 flex items-center gap-2">
          <svg width="15" height="9" viewBox="0 0 15 9"><rect width="15" height="9" rx="2" fill="#ddd" /><path d="M5 6l2.500-3L10 6z" fill="#333" /></svg>
          <Caret className="h-[3px] w-[5px] text-gray-200" />
        </button>
      </nav>
      <Ribbon />
      <div className="flex h-[31px] shrink-0 items-start border-t border-[#777] px-0.5 pt-0.5">
        <div className="flex h-[26px] w-[468px] items-center gap-[5px] border border-[#3c3c3c] bg-[#565656] pl-0.5">
          <span className="h-4 w-1 bg-[repeating-linear-gradient(0deg,#222_0_1px,transparent_1px_3px)]" />
          {drawTools.map((d, i) => (
            <button key={i}><Icon>{d}</Icon></button>
          ))}
        </div>
      </div>
      <Canvas />
      <StatusBar />
    </div>
  );
}
